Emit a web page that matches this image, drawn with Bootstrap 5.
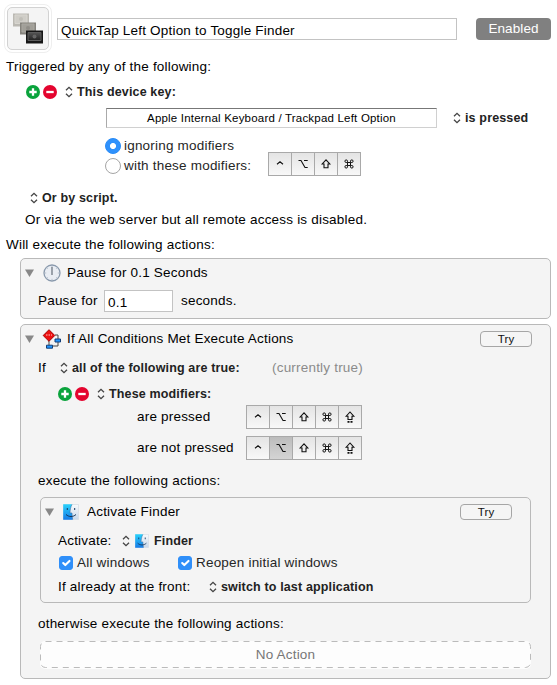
<!DOCTYPE html>
<html lang="en">
<head>
<meta charset="utf-8">
<meta name="viewport" content="width=device-width, initial-scale=1">
<title>Macro Editor</title>
<link href="https://cdn.jsdelivr.net/npm/bootstrap@5.3.0/dist/css/bootstrap.min.css" rel="stylesheet">
<style>
body{font-family:"Liberation Sans",Arial,sans-serif;font-size:13.5px;line-height:18px;letter-spacing:.2px;color:#000;background:#fff;width:557px;height:685px;overflow:hidden}
svg{display:block;flex:none}
.line{display:flex;align-items:center;height:22px;white-space:nowrap}
.strong-menu{font-weight:700;font-size:12.5px;letter-spacing:.15px;color:#222}
.strong-menu svg{margin-right:4px}
.head-row{height:56px;padding-left:4px}
.macro-icon{width:48px;height:49px;border:1px solid #eee;border-radius:8px;padding:2px;margin-top:4px}
.macro-inner{border:1px solid #d2d2d2;border-radius:5px;background:#f4f4f4;height:43px}
.form-control.mac-field{border:1px solid #c3c3c3;border-radius:0;font-size:13.5px;line-height:18px;letter-spacing:.2px;color:#000;padding:3px 3px 1px;height:22px;min-height:0;background:#fff}
.w-title{width:400px;margin:18px 19px 0 5px}
.w-num{width:69px}
.btn.enabled-btn{width:75px;height:22px;margin-top:18px;padding:0;border:0;border-radius:4px;background:#808080;color:#fff;font-size:13.5px;line-height:22px;letter-spacing:.1px}
.key-field{width:331px;height:20px;border:1px solid #d0d0d0;border-top-color:#777;border-left-color:#aaa;font-size:11.5px;line-height:19px;letter-spacing:.2px;text-align:center}
.form-check-input.mac-radio{width:16px;height:16px;margin:0 3px 0 0;border:1px solid #a5a5a5;flex:none}
.form-check-input.mac-radio:checked{border-color:#2a8cf7;background-color:#2f91fc;background-image:radial-gradient(circle,#fff 0 2.7px,transparent 3.3px)}
.form-check-input.mac-check{width:14px;height:14px;margin:0 4px 0 0;border-radius:3px;flex:none}
.form-check-input.mac-check:checked{background-color:#2f8ff9;border-color:#2f8ff9;background-size:14px 14px}
.soft{color:#262626}
.muted{color:#8b8b8b}
.mods{display:flex;border:1px solid #a9a9a9;height:24px}
.mods span{width:23px;display:flex;align-items:center;justify-content:center;background:linear-gradient(#e4e4e4,#f8f8f8);border-right:1px solid #a9a9a9}
.mods span:last-child{border-right:0;width:22px}
.mods .held{background:linear-gradient(#bcbcbc,#d4d4d4)}
.mod-first{margin-right:196px;margin-top:-4px}
.x6{padding-left:6px}.x25{padding-left:25px}.x27{padding-left:26px}.x30{padding-left:30px}.x106{padding-left:106px}.x105{padding-left:105px}
.minus-gap{margin-left:3px}
.gap-menu{padding-left:8px}
.key-row{height:28px}
.field-row{height:24px}
.radio-set{margin-top:6px}
.radio-set .line{height:20px}
.script-row{margin-top:11px}
.will-row{margin-top:3px}
.action-box{border:1px solid #b9b9b9;border-radius:5px;background:#f4f4f4}
.outer{margin-left:20px;width:531px}
.pause-box{height:61px;margin-top:2px}
.if-box{height:355px;margin-top:5px}
.title-row{height:27px;padding-left:4px}
.title-row .icon-slot{width:20px;margin:0 5px 0 8px}
.btn.try-btn{width:52px;height:16px;margin:0 18px 0 auto;border:1px solid #a6a6a6;border-radius:4px;padding:0;font-size:11.5px;line-height:14px;letter-spacing:.1px;color:#111;background:#f5f5f5}
.in{padding-left:17px}
.pause-row{height:22px;margin-top:4px}
.pause-lead{width:66px}
.cond-row{height:26px;margin-top:3px}
.cond-lead{width:22px}
.cond-menu{width:212px}
.these-row{height:26px;padding-left:37px}
.state-row{height:31px;padding-left:116px}
.first-state{margin-top:-6px}
.state-name{width:109px}
.exec-row{margin-top:7px}
.nested{margin-left:19px;width:491px;height:106px;margin-top:5px}
.act-row{height:24px;margin-top:4px}
.act-lead{width:64px}
.app-icon{margin-left:1px}
.strong-menu .app-icon{margin-right:5px}
.check-row{height:20px;padding-left:18px}
.all-win{width:119px}
.front-row{margin-top:3px}
.front-lead{width:151px}
.otherwise{margin-top:10px}
.empty-box{margin:6px 0 0 19px;width:491px;border-radius:5px;background:#fdfdfd;height:28px;color:#777;position:relative}
.empty-box svg{position:absolute;inset:0}
</style>
</head>
<body>
<svg width="0" height="0" class="position-absolute">
<defs>
<symbol id="updown" viewBox="0 0 8 12"><path d="M1 4.300 4 1.300l3 3M1 7.700l3 3 3-3" fill="none" stroke="#444" stroke-width="1.300"/></symbol>
<symbol id="plus" viewBox="0 0 14 14"><circle cx="7" cy="7" r="7" fill="#0aa33c"/><path d="M7 3.300v7.400M3.300 7h7.400" stroke="#fff" stroke-width="2.300"/></symbol>
<symbol id="minus" viewBox="0 0 14 14"><circle cx="7" cy="7" r="7" fill="#e4052f"/><path d="M3.300 7h7.400" stroke="#fff" stroke-width="2.300"/></symbol>
<symbol id="tri" viewBox="0 0 9 8"><path d="M0 .5h9L4.500 8z" fill="#888"/></symbol>
<symbol id="ctrl" viewBox="0 0 12 12"><path d="M3 6.200 6 3.800l3 2.400" fill="none" stroke="#111" stroke-width="1.100"/></symbol>
<symbol id="opt" viewBox="0 0 12 12"><path d="M1.500 2.500H4l4 7h2.700M7 2.500h3.700" fill="none" stroke="#111" stroke-width="1.100"/></symbol>
<symbol id="shift" viewBox="0 0 12 12"><path d="M6 1.800 2.200 6H4v3.700h4V6h1.800z" fill="none" stroke="#111" stroke-width="1.100"/></symbol>
<symbol id="cmd" viewBox="0 0 12 12"><path d="M4.500 4.500h3v3h-3zM4.500 4.500H3.200a1.300 1.300 0 1 1 1.300-1.300zM7.500 4.500V3.200a1.300 1.300 0 1 1 1.300 1.300zM7.500 7.500h1.300a1.300 1.300 0 1 1-1.300 1.300zM4.500 7.500v1.300a1.300 1.300 0 1 1-1.300-1.300z" fill="none" stroke="#111" stroke-width="1"/></symbol>
<symbol id="caps" viewBox="0 0 12 14"><path d="M6 2 2.200 6.200H4v3.300h4V6.200h1.800z" fill="none" stroke="#111" stroke-width="1.100"/><path d="M3.500 11h2v1.700h-2zM6.500 11h2v1.700h-2z" fill="#111"/></symbol>
<linearGradient id="blue" x2="0" y2="1"><stop stop-color="#29d2fb"/><stop offset="1" stop-color="#167be8"/></linearGradient>
<linearGradient id="pale" x2="0" y2="1"><stop stop-color="#f8fafc"/><stop offset="1" stop-color="#c8d8ea"/></linearGradient>
<symbol id="finder" viewBox="0 0 16 16"><path d="M.5.500h15v15H.500z" fill="url(#pale)" stroke="#d4dbe3" stroke-width=".7"/><path d="M.200.200h8.800C7.500 3.500 7 6 7 9h2c0 2.500.2 4.500.7 6.800H.200z" fill="url(#blue)"/><path d="M9 .500C7.500 3.500 7 6 7 9h2c0 2.500.2 4.500.7 6.500" fill="none" stroke="#3d6fa3" stroke-width=".6"/><path d="M3 10.500c3 2.700 7 2.700 10 0M4.300 4v2M11.700 4v2" fill="none" stroke="#14365c" stroke-width="1"/></symbol>
<linearGradient id="dark" x2="0" y2="1"><stop stop-color="#555"/><stop offset="1" stop-color="#222"/></linearGradient>
</defs>
</svg>

<header class="head-row d-flex align-items-start">
  <div class="macro-icon"><div class="macro-inner">
    <svg width="40" height="41" viewBox="0 0 40 41"><g transform="translate(5 5.500)">
      <path d="M0 0h16v13H0z" fill="#bbb9b3"/><path d="M2 1.500h12v8.500H2z" fill="#cfcdc7" stroke="#d8d6d0"/><circle cx="8" cy="5.500" r="2" fill="#c0beb8"/>
      <path d="M7 9h16v12H7z" fill="#85837d"/><path d="M9 10.500h12v8H9z" fill="#a19f98" stroke="#aaa8a1"/><circle cx="15" cy="14.500" r="2" fill="#8f8d87"/>
      <path d="M13 17h17v13H13z" fill="#161616"/><path d="M15 19h13v8H15z" fill="url(#dark)" stroke="#5c5c5c"/><circle cx="21.500" cy="23" r="2" fill="#666"/></g></svg>
  </div></div>
  <input class="form-control mac-field w-title" value="QuickTap Left Option to Toggle Finder" aria-label="Macro name">
  <button class="btn enabled-btn" type="button">Enabled</button>
</header>

<div class="line x6">Triggered by any of the following:</div>
<div class="line x27 key-row">
  <svg width="14" height="14"><use href="#plus"/></svg><svg class="minus-gap" width="14" height="14"><use href="#minus"/></svg>
  <span class="line strong-menu gap-menu"><svg width="8" height="12"><use href="#updown"/></svg>This device key:</span>
</div>
<div class="line x106 field-row">
  <div class="key-field">Apple Internal Keyboard / Trackpad Left Option</div>
  <span class="line strong-menu ps-3"><svg width="8" height="12"><use href="#updown"/></svg>is pressed</span>
</div>
<div class="radio-set x105 soft">
  <label class="line"><input class="form-check-input mac-radio" type="radio" name="m" checked>ignoring modifiers</label>
  <div class="line"><label class="line"><input class="form-check-input mac-radio" type="radio" name="m">with these modifiers:</label>
    <div class="mods ms-auto mod-first"><span><svg width="12" height="12"><use href="#ctrl"/></svg></span><span><svg width="12" height="12"><use href="#opt"/></svg></span><span><svg width="12" height="12"><use href="#shift"/></svg></span><span><svg width="12" height="12"><use href="#cmd"/></svg></span></div>
  </div>
</div>
<div class="line x30 script-row strong-menu"><svg width="8" height="12"><use href="#updown"/></svg>Or by script.</div>
<div class="line x25">Or via the web server but all remote access is disabled.</div>
<div class="line x6 will-row">Will execute the following actions:</div>

<section class="action-box outer pause-box">
  <div class="line title-row"><svg width="9" height="8"><use href="#tri"/></svg>
    <div class="icon-slot"><svg width="20" height="20" viewBox="0 0 20 20"><circle cx="10" cy="10" r="8" fill="#e9edf3" stroke="#8999ac" stroke-width="1.300"/><path d="M10 2.500v1.700M10 15.800v1.700M2.500 10h1.700M15.800 10h1.700M4.700 4.700l1 1M14.300 14.300l1 1M4.700 15.300l1-1M14.300 5.700l1-1" stroke="#a8b3c0" stroke-width=".8"/><path d="M10 4v8" stroke="#58616c" stroke-width="1.100"/></svg></div>Pause for 0.1 Seconds</div>
  <div class="line in pause-row"><span class="pause-lead">Pause for</span><input class="form-control mac-field w-num" value="0.1" aria-label="Seconds"><span class="ps-2">seconds.</span></div>
</section>

<section class="action-box outer if-box">
  <div class="line title-row"><svg width="9" height="8"><use href="#tri"/></svg>
    <div class="icon-slot"><svg width="20" height="20" viewBox="0 0 20 20"><path d="M7 11v6M13 6h3v4M16 13v4h-6" fill="none" stroke="#444" stroke-width="1"/><path d="M7 .700 12.800 6.500 7 12.300 1.200 6.500z" fill="#ed1010" stroke="#a60000"/><path d="M4 6h1.500M6.500 6H8M9 6h1" stroke="#ffc6c6"/><path d="M13 10h5.500v3H13zM4.500 16.200h6v3h-6z" fill="#2196ff" stroke="#123f78"/></svg></div>If All Conditions Met Execute Actions
    <button class="btn try-btn" type="button">Try</button></div>
  <div class="line in cond-row"><span class="cond-lead">If</span><span class="line strong-menu cond-menu"><svg width="8" height="12"><use href="#updown"/></svg>all of the following are true:</span><span class="muted">(currently true)</span></div>
  <div class="line these-row"><svg width="14" height="14"><use href="#plus"/></svg><svg class="minus-gap" width="14" height="14"><use href="#minus"/></svg><span class="line strong-menu gap-menu"><svg width="8" height="12"><use href="#updown"/></svg>These modifiers:</span></div>
  <div class="line state-row first-state"><span class="state-name">are pressed</span>
    <div class="mods"><span><svg width="12" height="12"><use href="#ctrl"/></svg></span><span><svg width="12" height="12"><use href="#opt"/></svg></span><span><svg width="12" height="12"><use href="#shift"/></svg></span><span><svg width="12" height="12"><use href="#cmd"/></svg></span><span><svg width="12" height="14"><use href="#caps"/></svg></span></div></div>
  <div class="line state-row"><span class="state-name">are not pressed</span>
    <div class="mods"><span><svg width="12" height="12"><use href="#ctrl"/></svg></span><span class="held"><svg width="12" height="12"><use href="#opt"/></svg></span><span><svg width="12" height="12"><use href="#shift"/></svg></span><span><svg width="12" height="12"><use href="#cmd"/></svg></span><span><svg width="12" height="14"><use href="#caps"/></svg></span></div></div>
  <div class="line in exec-row">execute the following actions:</div>
  <div class="action-box nested">
    <div class="line title-row"><svg width="9" height="8"><use href="#tri"/></svg><div class="icon-slot"><svg width="18" height="16"><use href="#finder"/></svg></div>Activate Finder<button class="btn try-btn" type="button">Try</button></div>
    <div class="line in act-row"><span class="act-lead">Activate:</span><span class="line strong-menu"><svg width="8" height="12"><use href="#updown"/></svg><svg class="app-icon" width="14" height="14"><use href="#finder"/></svg>Finder</span></div>
    <div class="line check-row soft"><label class="line all-win"><input class="form-check-input mac-check" type="checkbox" checked>All windows</label><label class="line"><input class="form-check-input mac-check" type="checkbox" checked>Reopen initial windows</label></div>
    <div class="line in front-row"><span class="front-lead">If already at the front:</span><span class="line strong-menu"><svg width="8" height="12"><use href="#updown"/></svg>switch to last application</span></div>
  </div>
  <div class="line in otherwise">otherwise execute the following actions:</div>
  <div class="empty-box d-flex align-items-center justify-content-center"><svg width="491" height="28"><rect x=".5" y=".5" width="490" height="26" rx="5" fill="none" stroke="#bbb" stroke-dasharray="6 5"/></svg>No Action</div>
</section>
<script src="https://cdn.jsdelivr.net/npm/bootstrap@5.3.0/dist/js/bootstrap.bundle.min.js"></script>
</body>
</html>
